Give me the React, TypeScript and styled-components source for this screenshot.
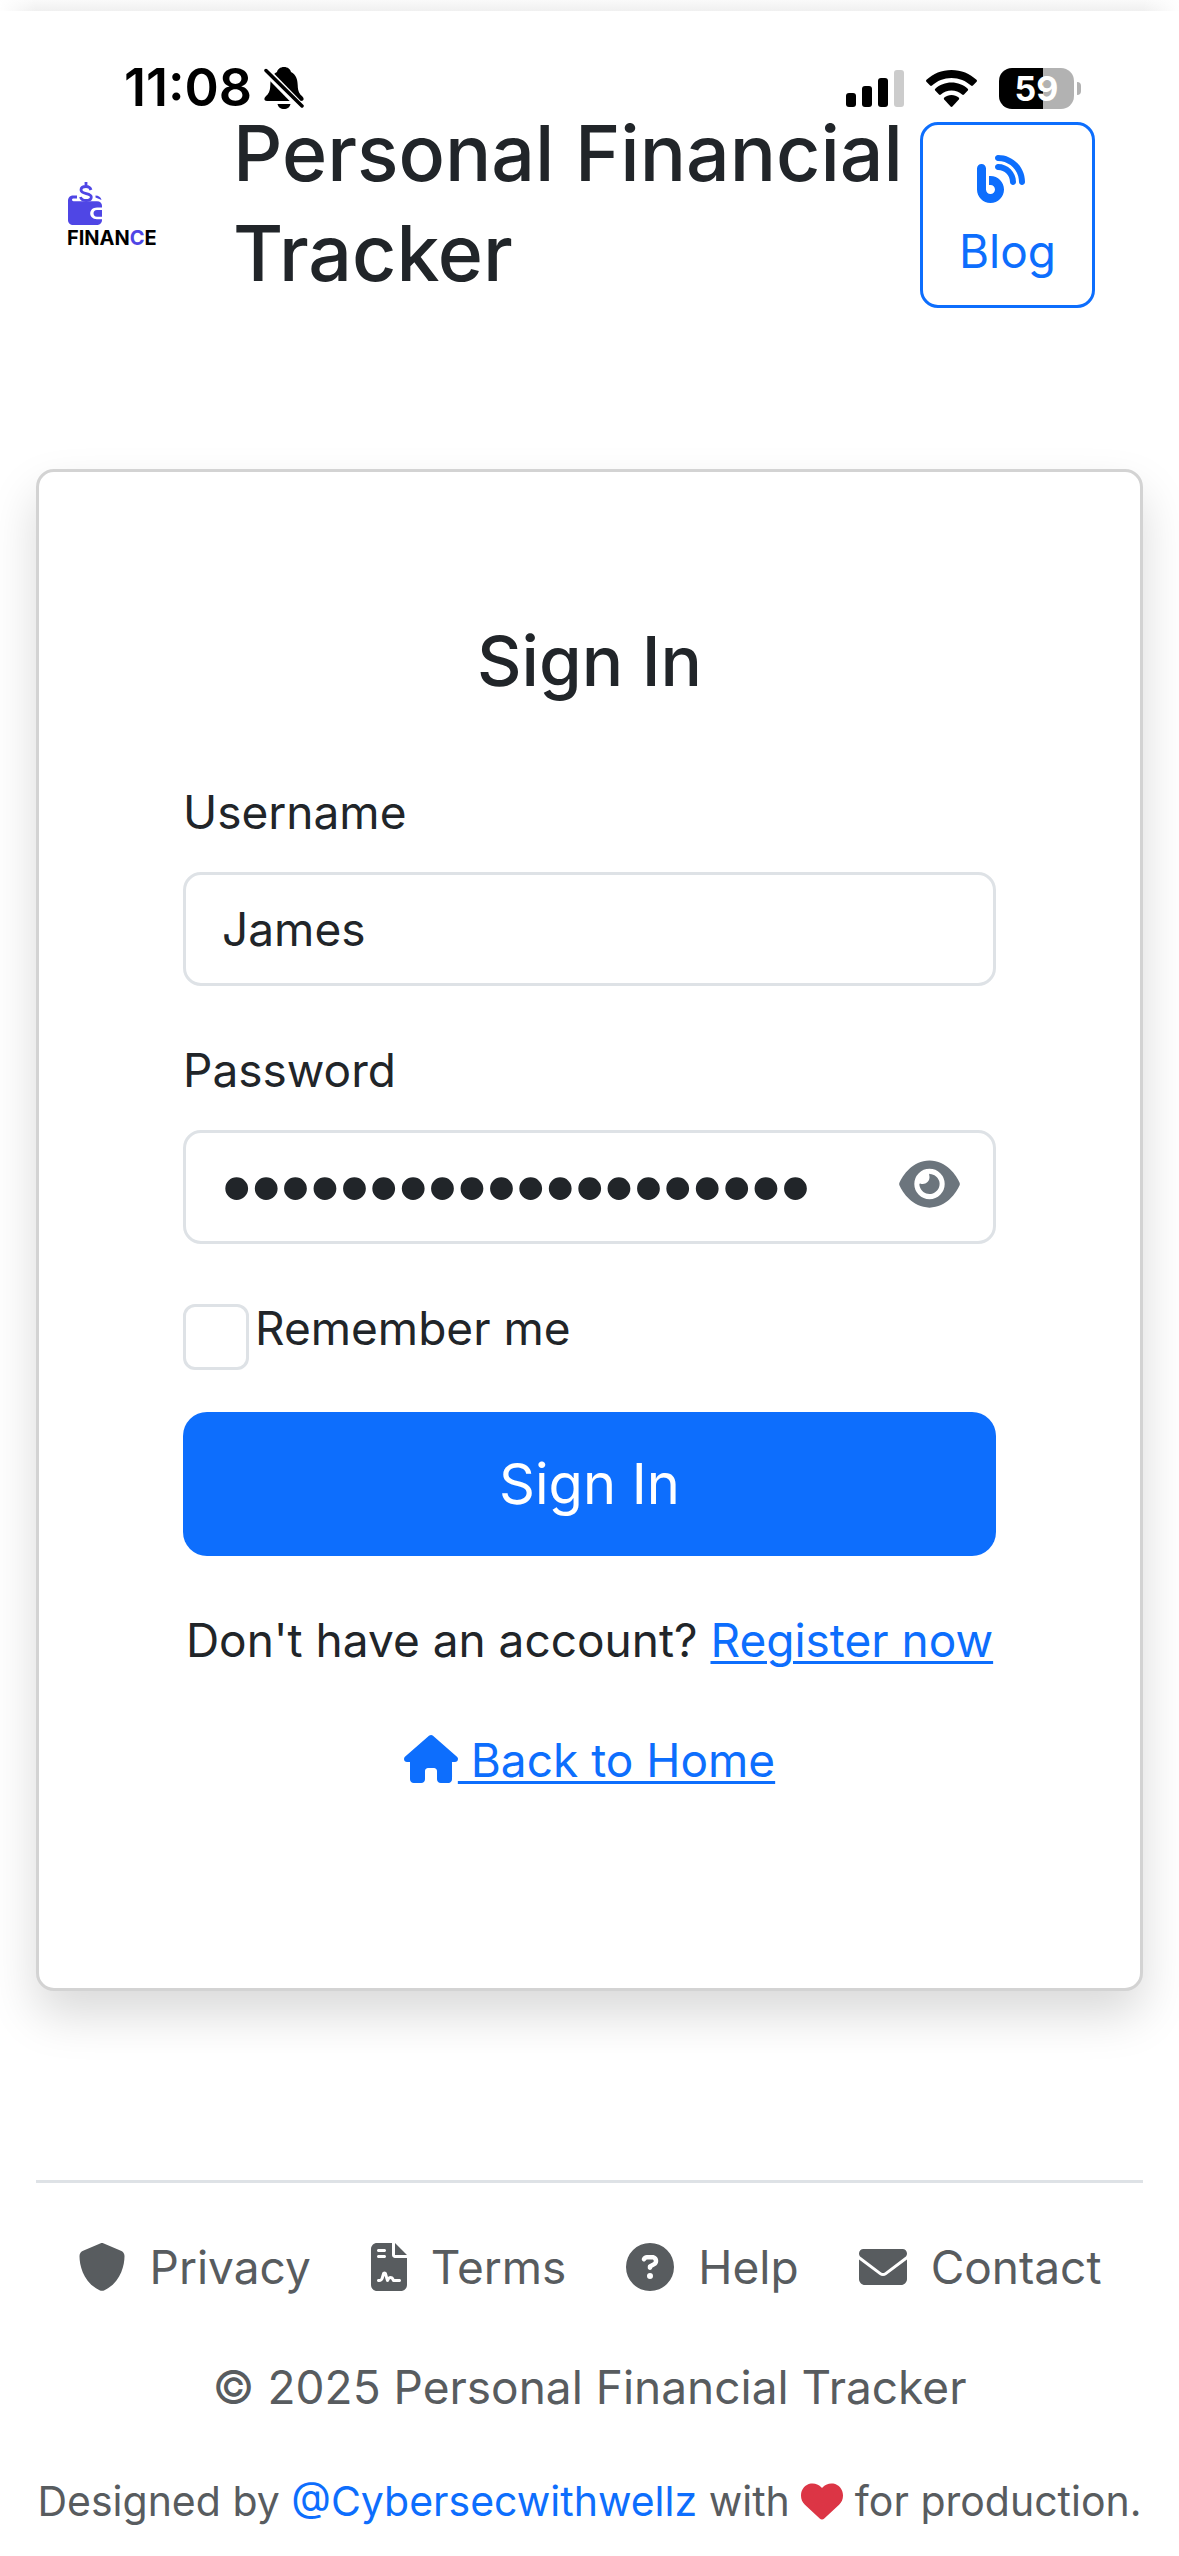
import React, { useState } from "react";
import styled, { createGlobalStyle } from "styled-components";
import {
  FaBlog,
  FaCircleQuestion,
  FaEnvelope,
  FaEye,
  FaFileContract,
  FaHeart,
  FaHouse,
  FaShield,
} from "react-icons/fa6";

const color = {
  ink: "#212529",
  muted: "#585c5f",
  icon: "#6c757d",
  primary: "#0d6efd",
  danger: "#dc3545",
  line: "#dee2e6",
  cardLine: "#d3d3d3",
  brand: "#4f46e5",
};

const GlobalStyle = createGlobalStyle`
  *, *::before, *::after { box-sizing: border-box; }
  body {
    margin: 0;
    background: #fff;
    color: ${color.ink};
    font: 400 46px/72px Inter, "Liberation Sans", sans-serif;
  }
  h1, h2, p { margin: 0; }
  svg { flex: none; }
`;

const Page = styled.div`
  position: relative;
  display: flex;
  flex-direction: column;
  min-height: 100vh;
`;

const TopEdge = styled.div`
  height: 11px;
  background:
    linear-gradient(90deg, #fff, transparent 36px, transparent calc(100% - 36px), #fff),
    linear-gradient(#fafafa, #f0f0f0);
`;

const StatusBar = styled.div`
  position: absolute;
  top: 63px;
  left: 0;
  right: 0;
  display: flex;
  align-items: center;
  justify-content: space-between;
  height: 50px;
  padding: 0 98px 0 124px;
  color: #000;
`;

const StatusGroup = styled.div<{ $gap: number }>`
  display: flex;
  align-items: center;
  gap: ${(p) => p.$gap}px;
`;

const Clock = styled.time`
  font-size: 52px;
  font-weight: 600;
  line-height: 50px;
`;

const Battery = styled.div`
  position: relative;
  width: 75px;
  height: 41px;
  margin-right: 7px;
  border-radius: 13px;
  background: linear-gradient(90deg, #000 59%, #b2b2b2 59%);
  color: #fff;
  font-size: 34px;
  font-weight: 700;
  line-height: 41px;
  text-align: center;

  &::after {
    content: "";
    position: absolute;
    top: 14px;
    right: -7px;
    width: 4px;
    height: 13px;
    border-radius: 0 6px 6px 0;
    background: #b2b2b2;
  }
`;

const Header = styled.header`
  display: flex;
  align-items: center;
  padding: 92px 84px 0 67px;
`;

const Brand = styled.a`
  display: flex;
  flex: none;
  flex-direction: column;
  gap: 3px;
  width: 90px;
  margin-right: 76px;
  color: #000;
  font-size: 20px;
  font-weight: 700;
  line-height: 20px;
  text-decoration: none;
`;

const BrandAccent = styled.span`
  color: ${color.brand};
`;

const Title = styled.h1`
  flex: 1;
  margin-bottom: 24px;
  font-size: 77px;
  font-weight: 500;
  line-height: 100px;
`;

const BlogLink = styled.a`
  display: flex;
  flex-direction: column;
  align-items: center;
  padding: 18px 36px;
  border: 3px solid ${color.primary};
  border-radius: 18px;
  color: ${color.primary};
  text-decoration: none;
`;

const BlogIcon = styled.span`
  display: flex;
  align-items: center;
  height: 72px;
  margin-right: 12px;
`;

const Main = styled.main`
  flex: 1;
  padding: 142px 36px 0;
`;

const Card = styled.section`
  padding: 144px;
  border: 3px solid ${color.cardLine};
  border-radius: 18px;
  background: #fff;
  box-shadow: 0 24px 48px rgba(0, 0, 0, 0.15);
`;

const CardTitle = styled.h2`
  margin-bottom: 70px;
  font-size: 69px;
  font-weight: 500;
  line-height: 90px;
  text-align: center;
`;

const Field = styled.div`
  display: flex;
  flex-direction: column;
  gap: 24px;
  margin-bottom: 48px;
`;

const InputFrame = styled.div`
  display: flex;
  align-items: center;
  height: 114px;
  padding: 0 33px 0 36px;
  border: 3px solid ${color.line};
  border-radius: 18px;
`;

const TextInput = styled.input`
  flex: 1;
  min-width: 0;
  height: 72px;
  padding: 0;
  border: 0;
  outline: 0;
  background: transparent;
  color: inherit;
  font: inherit;

  &[type="password"] {
    font-family: "Liberation Sans", sans-serif;
    font-size: 84px;
  }
`;

const RevealButton = styled.button`
  display: flex;
  padding: 0 0 6px;
  border: 0;
  background: none;
  color: ${color.icon};

  svg {
    width: 61px;
    height: 54px;
  }
`;

const RememberRow = styled.div`
  display: flex;
  align-items: flex-start;
  gap: 6px;
  height: 72px;
  margin-bottom: 48px;
`;

const CheckBox = styled.input`
  flex: none;
  appearance: none;
  width: 66px;
  height: 66px;
  margin: 12px 0 0;
  border: 3px solid ${color.line};
  border-radius: 12px;
  background: #fff;

  &:checked {
    border-color: ${color.primary};
    background: ${color.primary};
  }
`;

const SubmitButton = styled.button`
  display: block;
  width: 100%;
  height: 144px;
  margin-bottom: 48px;
  padding: 0;
  border: 0;
  border-radius: 24px;
  background: ${color.primary};
  color: #fff;
  font: inherit;
  font-size: 56px;
`;

const CardText = styled.p`
  margin: 0 -6px 48px;
  text-align: center;
`;

const TextLink = styled.a`
  color: ${color.primary};
  text-decoration: underline;
  text-decoration-thickness: 3px;
  text-underline-offset: 4px;

  svg {
    width: 54px;
    height: 48px;
    vertical-align: -6px;
  }
`;

const Footer = styled.footer`
  display: flex;
  flex-direction: column;
  align-items: center;
  gap: 48px;
  margin: 187px 36px 0;
  padding: 48px 0 25px;
  border-top: 3px solid ${color.line};
  color: ${color.muted};
`;

const FooterNav = styled.nav`
  display: flex;
  justify-content: center;
  gap: 60px;
`;

const FooterLink = styled.a<{ $iconWidth: number }>`
  display: flex;
  align-items: center;
  gap: 24px;
  color: inherit;
  text-decoration: none;

  svg {
    width: ${(p) => p.$iconWidth}px;
    height: 48px;
  }
`;

const Credit = styled.p`
  margin: 0 -24px;
  font-size: 41px;
  line-height: 60px;
  white-space: nowrap;
`;

const CreditLink = styled.a`
  color: ${color.primary};
  text-decoration: none;
`;

const Heart = styled(FaHeart)`
  color: ${color.danger};
  vertical-align: -6px;
`;

const BellOff = () => (
  <svg width="40" height="42" viewBox="0 0 40 42" aria-label="Silent mode">
    <defs>
      <mask id="bell-slash">
        <rect width="40" height="42" fill="#fff" />
        <path d="M-1 1 40 43" stroke="#000" strokeWidth="8" />
      </mask>
    </defs>
    <g mask="url(#bell-slash)">
      <path d="M20 0c-3.800 0-6.400 2.300-7 5C8 7.500 6.500 12 6.300 18c-.2 7-2 9-4.700 11.500C-.6 31.800.3 34 3 34h34c2.700 0 3.600-2.200 1.400-4.500-2.700-2.500-4.500-4.500-4.700-11.500C33.500 12 32 7.500 27 5c-.6-2.700-3.200-5-7-5z" />
      <path d="M13.500 37h13c-.5 3-3.200 5-6.500 5s-6-2-6.500-5z" />
    </g>
    <path d="M2 3.500 38 39" stroke="#000" strokeWidth="3.500" strokeLinecap="round" />
  </svg>
);

const Signal = () => (
  <svg width="58" height="37" viewBox="0 0 58 37" aria-label="Signal strength">
    <rect x="0" y="23" width="10" height="14" rx="3" />
    <rect x="16" y="16" width="10" height="21" rx="3" />
    <rect x="32" y="8" width="10" height="29" rx="3" />
    <rect x="48" y="0" width="10" height="37" rx="3" fill="#ccc" />
  </svg>
);

const Wifi = () => (
  <svg width="51" height="37" viewBox="0 0 51 37" aria-label="Wi-Fi">
    <path d="M25.500 0C35.200 0 44 3.700 50.500 9.800c.6.600.6 1.400.1 2L46.900 15.500c-.5.500-1.300.5-1.900 0C39.900 10.700 33 7.900 25.500 7.900S11.100 10.700 6 15.500c-.6.500-1.400.5-1.900 0L.4 11.800c-.5-.6-.5-1.400.1-2C7 3.700 15.800 0 25.500 0z" />
    <path d="M25.500 12.500c6.200 0 11.900 2.300 16.200 6.200.6.500.6 1.400.1 1.900L38 24.500c-.5.500-1.300.5-1.900.1-2.900-2.500-6.600-4-10.600-4s-7.700 1.500-10.600 4c-.6.400-1.400.4-1.900-.1l-3.800-3.900c-.5-.5-.5-1.400.1-1.900 4.300-3.900 10-6.200 16.200-6.200z" />
    <path d="M25.500 25c2.700 0 5.200 1 7.200 2.600.6.500.6 1.300.1 1.900l-6.400 7c-.5.500-1.300.5-1.800 0l-6.400-7c-.5-.6-.5-1.400.1-1.900C20.300 26 22.800 25 25.500 25z" />
  </svg>
);

const WalletMark = () => (
  <svg width="36" height="43" viewBox="0 0 36 43" fill={color.brand} aria-hidden="true">
    <path d="M6 13.500h4v3H6.500c-2 0-2 2.700 0 2.700H30c3 0 5 1.800 5 4.500v1.800h-5c-9 0-9 11.700 0 11.700h5v.8c0 2.800-2 5-5 5H6c-3 0-5-2.200-5-5V19c0-3.300 2-5.500 5-5.500z" />
    <path d="M35 28v6.700h-5c-4.600 0-4.600-6.700 0-6.700zM28.500 13.500c3 0 5.500 1.500 6 4.500l-6-2.500z" />
    <path
      d="M24 8c-.7-2.400-2.600-3.500-5-3.500-3 0-5 1.400-5 3.500 0 4.600 10.300 2.600 10.300 7 0 2.200-2.200 3.500-5.200 3.500s-5-1.200-5.600-3.500M19 0v4.500"
      fill="none"
      stroke={color.brand}
      strokeWidth="2.800"
    />
  </svg>
);

const footerLinks = [
  { label: "Privacy", Icon: FaShield, iconWidth: 48 },
  { label: "Terms", Icon: FaFileContract, iconWidth: 36 },
  { label: "Help", Icon: FaCircleQuestion, iconWidth: 48 },
  { label: "Contact", Icon: FaEnvelope, iconWidth: 48 },
];

export default function App() {
  const [username, setUsername] = useState("James");
  const [password, setPassword] = useState("correcthorsebattery1");
  const [revealed, setRevealed] = useState(false);

  return (
    <>
      <GlobalStyle />
      <Page>
        <TopEdge />
        <StatusBar>
          <StatusGroup $gap={12}>
            <Clock>11:08</Clock>
            <BellOff />
          </StatusGroup>
          <StatusGroup $gap={22}>
            <Signal />
            <Wifi />
            <Battery>59</Battery>
          </StatusGroup>
        </StatusBar>

        <Header>
          <Brand href="#home">
            <WalletMark />
            <span>
              FINAN<BrandAccent>C</BrandAccent>E
            </span>
          </Brand>
          <Title>Personal Financial Tracker</Title>
          <BlogLink href="#blog">
            <BlogIcon>
              <FaBlog size={48} />
            </BlogIcon>
            Blog
          </BlogLink>
        </Header>

        <Main>
          <Card>
            <CardTitle>Sign In</CardTitle>
            <form onSubmit={(e) => e.preventDefault()}>
              <Field>
                <label htmlFor="username">Username</label>
                <InputFrame>
                  <TextInput
                    id="username"
                    type="text"
                    value={username}
                    onChange={(e) => setUsername(e.target.value)}
                  />
                </InputFrame>
              </Field>
              <Field>
                <label htmlFor="password">Password</label>
                <InputFrame>
                  <TextInput
                    id="password"
                    type={revealed ? "text" : "password"}
                    value={password}
                    onChange={(e) => setPassword(e.target.value)}
                  />
                  <RevealButton
                    type="button"
                    aria-label="Show password"
                    onClick={() => setRevealed(!revealed)}
                  >
                    <FaEye />
                  </RevealButton>
                </InputFrame>
              </Field>
              <RememberRow>
                <CheckBox id="remember" type="checkbox" />
                <label htmlFor="remember">Remember me</label>
              </RememberRow>
              <SubmitButton type="submit">Sign In</SubmitButton>
            </form>
            <CardText>
              Don't have an account? <TextLink href="#register">Register now</TextLink>
            </CardText>
            <CardText>
              <TextLink href="#home">
                <FaHouse /> Back to Home
              </TextLink>
            </CardText>
          </Card>
        </Main>

        <Footer>
          <FooterNav>
            {footerLinks.map(({ label, Icon, iconWidth }) => (
              <FooterLink key={label} href={`#${label.toLowerCase()}`} $iconWidth={iconWidth}>
                <Icon />
                {label}
              </FooterLink>
            ))}
          </FooterNav>
          <p>© 2025 Personal Financial Tracker</p>
          <Credit>
            Designed by <CreditLink href="#author">@Cybersecwithwellz</CreditLink> with{" "}
            <Heart size={42} /> for production.
          </Credit>
        </Footer>
      </Page>
    </>
  );
}
